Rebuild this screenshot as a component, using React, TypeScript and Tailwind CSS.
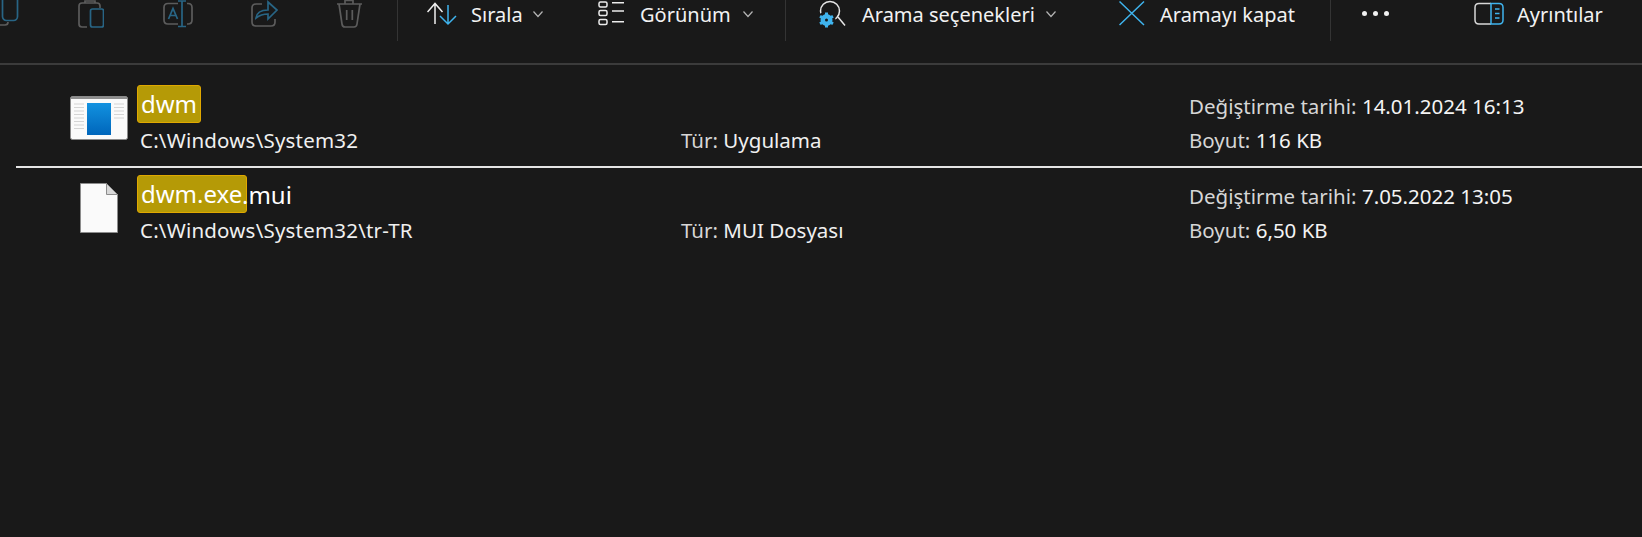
const BLUE = "#3fb4ee";
const DIM = "#286585";
const GRAY = "#5c5c5c";

const Chevron = ({ className }: { className: string }) => (
  <svg viewBox="0 0 10 41" className={`w-[10px] h-[41px] shrink-0 ${className}`} fill="none" stroke="#b4b4b4" strokeWidth="1.2">
    <path d="M.5 11.500l4.500 5 4.500-5" />
  </svg>
);

const Separator = ({ className }: { className: string }) => (
  <div className={`w-px h-[41px] shrink-0 bg-[#343434] ${className}`} />
);

const Label = ({ className, children }: { className: string; children: string }) => (
  <span className={`text-[20px] leading-[30px] text-[#f2f2f2] whitespace-nowrap shrink-0 ${className}`}>{children}</span>
);

const Toolbar = () => (
  <div className="flex items-start h-[63px] border-b-2 border-[#3b3b3b] box-content">
    {/* disabled actions */}
    <svg viewBox="0 0 19 41" className="w-[19px] h-[41px] shrink-0" fill="none" strokeWidth="1.7">
      <rect x="2.500" y="-4" width="15" height="24.500" rx="4" stroke={DIM} />
      <path d="M0 25h5q3 0 3-3" stroke={GRAY} />
    </svg>
    <svg viewBox="78 0 26 41" className="ml-[59px] w-[26px] h-[41px] shrink-0" fill="none" strokeWidth="1.7">
      <path d="M87 27h-5q-3 0-3-3V6q0-3 3-3h15q3 0 3 3v2" stroke={GRAY} />
      <path d="M85 3V1h10v2" stroke={GRAY} />
      <rect x="90.500" y="9" width="13" height="18" rx="2" stroke={DIM} />
    </svg>
    <svg viewBox="163 0 30 41" className="ml-[59px] w-[30px] h-[41px] shrink-0" fill="none" strokeWidth="1.7">
      <path d="M178 3.500h-10q-4 0-4 4v12.500q0 4 4 4h10M187 3.500h1q4 0 4 4v12.500q0 4-4 4h-1" stroke={GRAY} />
      <path d="M178 1h8M182 1v25M178 26.500h8M168.500 19l4.500-10.500 4.500 10.500M170 15.500h6" stroke={DIM} />
    </svg>
    <svg viewBox="250 0 28 41" className="ml-[57px] w-[28px] h-[41px] shrink-0" fill="none" strokeWidth="1.7">
      <path d="M262 4h-6q-4 0-4 4v14q0 4 4 4h15q4 0 4-4v-3" stroke={GRAY} />
      <path d="M256 18q1-8 12-8V2l9 8-9 9v-5q-7 0-12 4z" stroke={DIM} />
    </svg>
    <svg viewBox="337 0 26 41" className="ml-[59px] w-[26px] h-[41px] shrink-0" fill="none" strokeWidth="1.7" stroke={GRAY}>
      <path d="M337 4h25M345 4V.5h8V4M339 4l3 20q.4 3 3 3h9q2.600 0 3-3l3-20M346.700 10v10M352.300 10v10" />
    </svg>
    <Separator className="ml-[34px]" />

    <svg viewBox="427 0 30 41" className="ml-[29px] w-[30px] h-[41px] shrink-0" fill="none" strokeWidth="1.5">
      <path d="M435 24V4M427.500 12l7.500-8.500 7.500 8.500" stroke="#f0f0f0" />
      <path d="M448 5v19M440 16l8 8 8-8" stroke={BLUE} />
    </svg>
    <Label className="ml-[14px] w-[50px]">Sırala</Label>
    <Chevron className="ml-[12px]" />

    <svg viewBox="598 0 27 41" className="ml-[55px] w-[27px] h-[41px] shrink-0" fill="none" strokeWidth="1.5" stroke="#ececec">
      <rect x="599" y="2" width="8" height="5" rx="1.500" />
      <rect x="599" y="10.500" width="8" height="5" rx="1.500" />
      <rect x="599" y="19.500" width="8" height="5" rx="1.500" />
      <path d="M612 2.700h12M612 11h12M612 21.700h12" />
    </svg>
    <Label className="ml-[15px] w-[90px]">Görünüm</Label>
    <Chevron className="ml-[13px]" />
    <Separator className="ml-[32px]" />

    <svg viewBox="818 0 28 41" className="ml-[32px] w-[28px] h-[41px] shrink-0" fill="none">
      <circle cx="830" cy="11" r="9.500" stroke="#e6e6e6" strokeWidth="1.5" />
      <path d="M838 17l7 8.500" stroke="#e6e6e6" strokeWidth="1.5" />
      <circle cx="826.500" cy="20" r="9" fill="#191919" />
      <circle cx="826.500" cy="20" r="4.200" stroke={BLUE} strokeWidth="3.600" />
      <path d="M826.500 12.500v15M820 16.300l13 7.400M820 23.700l13-7.400" stroke={BLUE} strokeWidth="3" />
      <circle cx="826.500" cy="20" r="1.500" fill="#191919" />
    </svg>
    <Label className="ml-[16px] w-[171px]">Arama seçenekleri</Label>
    <Chevron className="ml-[13px]" />

    <svg viewBox="1119 0 26 41" className="ml-[63px] w-[26px] h-[41px] shrink-0" fill="none" stroke={BLUE} strokeWidth="1.5">
      <path d="M1119.500 1.500l24.500 23.500M1144 1.500l-24.500 23.500" />
    </svg>
    <Label className="ml-[15px] w-[136px]">Aramayı kapat</Label>
    <Separator className="ml-[34px]" />

    <svg viewBox="1361 0 30 41" className="ml-[30px] w-[30px] h-[41px] shrink-0" fill="#f0f0f0">
      <circle cx="1364.500" cy="13.500" r="2.500" />
      <circle cx="1375.500" cy="13.500" r="2.500" />
      <circle cx="1386.500" cy="13.500" r="2.500" />
    </svg>

    <svg viewBox="1474 0 30 41" className="ml-[83px] w-[30px] h-[41px] shrink-0" fill="none" strokeWidth="1.5">
      <path d="M1491 3.500h-12q-4 0-4 4v12.500q0 4 4 4h12" stroke="#d8d8d8" />
      <path d="M1491 3.500h8q4 0 4 4v12.500q0 4-4 4h-8z" stroke={BLUE} />
      <path d="M1495 9h4.500M1495 13.500h4.500M1495 18h4.500" stroke={BLUE} />
    </svg>
    <Label className="ml-[13px] w-[85px]">Ayrıntılar</Label>
  </div>
);

const AppIcon = () => (
  <svg viewBox="0 0 58 44" className="w-[58px] h-[44px]">
    <rect x="0.500" y="0.500" width="57" height="43" rx="2" fill="#fafafa" stroke="#8a8a8a" />
    <rect x="1" y="1" width="56" height="2" fill="#8e8e8e" />
    <path d="M4 8h10M4 11.500h10M4 15h10M4 18.500h10M4 22h10M4 25.500h10M4 29h10M4 32.500h10" stroke="#d4d4d4" strokeWidth="1" />
    <path d="M44 8h10M44 11.500h10M44 15h10M44 18.500h10M44 22h10" stroke="#d4d4d4" strokeWidth="1" />
    <defs>
      <linearGradient id="pane" x1="0" y1="0" x2="0" y2="1">
        <stop offset="0" stopColor="#1292e0" />
        <stop offset="1" stopColor="#0066bb" />
      </linearGradient>
    </defs>
    <rect x="17" y="7" width="24" height="32" fill="url(#pane)" />
  </svg>
);

const FileIcon = () => (
  <svg viewBox="0 0 38 50" className="w-[38px] h-[50px]">
    <path d="M.5.5h26l11 11v38H.5z" fill="#fafafa" stroke="#8c8c8c" />
    <path d="M26.500.5v11h11z" fill="#d8d8d8" stroke="#8c8c8c" />
  </svg>
);

type RowProps = {
  icon: React.ReactNode;
  iconPad: string;
  match: string;
  matchWidth: string;
  rest?: string;
  path: string;
  kind: string;
  date: string;
  size: string;
  className: string;
};

const Row = ({ icon, iconPad, match, matchWidth, rest, path, kind, date, size, className }: RowProps) => (
  <div className={`grid grid-cols-[137px_544px_508px_1fr] grid-rows-[38px_32px] text-[20.5px] ${className}`}>
    <div className={`row-span-2 flex items-center justify-end pb-[5px] ${iconPad}`}>{icon}</div>
    <div className="flex items-center text-[24px] leading-[30px] text-white">
      <span className={`h-[38px] flex items-center rounded-[3px] border border-[#e0a800] bg-[#b59a06] pl-[3px] ${matchWidth}`}>{match}</span>
      {rest && <span className="ml-[-5px] pt-[1px]">{rest}</span>}
    </div>
    <div />
    <div className="flex items-center pt-[5px] text-[#d6d6d6]">
      Değiştirme tarihi:&nbsp;<span className="text-[#f4f4f4]">{date}</span>
    </div>
    <div className="flex items-center pl-[3px] pt-[3px] tracking-[0.2px] text-[#f0f0f0]">{path}</div>
    <div className="flex items-center pt-[3px] text-[#d6d6d6]">
      Tür:&nbsp;<span className="text-[#f0f0f0]">{kind}</span>
    </div>
    <div className="flex items-center pt-[3px] text-[#d6d6d6]">
      Boyut:&nbsp;<span className="text-[#f4f4f4]">{size}</span>
    </div>
  </div>
);

export default function App() {
  return (
    <div className="h-screen overflow-hidden bg-[#191919] font-['Noto_Sans','Open_Sans',sans-serif]">
      <Toolbar />
      <Row
        className="pt-[20px] pb-[11px]"
        icon={<AppIcon />}
        iconPad="pr-[9px]"
        match="dwm"
        matchWidth="w-[64px]"
        path="C:\Windows\System32"
        kind="Uygulama"
        date="14.01.2024 16:13"
        size="116 KB"
      />
      <div className="ml-[16px] h-[2px] bg-[#e4e4e4]" />
      <Row
        className="pt-[7px]"
        icon={<FileIcon />}
        iconPad="pr-[19px]"
        match="dwm.exe"
        matchWidth="w-[110px]"
        rest=".mui"
        path="C:\Windows\System32\tr-TR"
        kind="MUI Dosyası"
        date="7.05.2022 13:05"
        size="6,50 KB"
      />
    </div>
  );
}
